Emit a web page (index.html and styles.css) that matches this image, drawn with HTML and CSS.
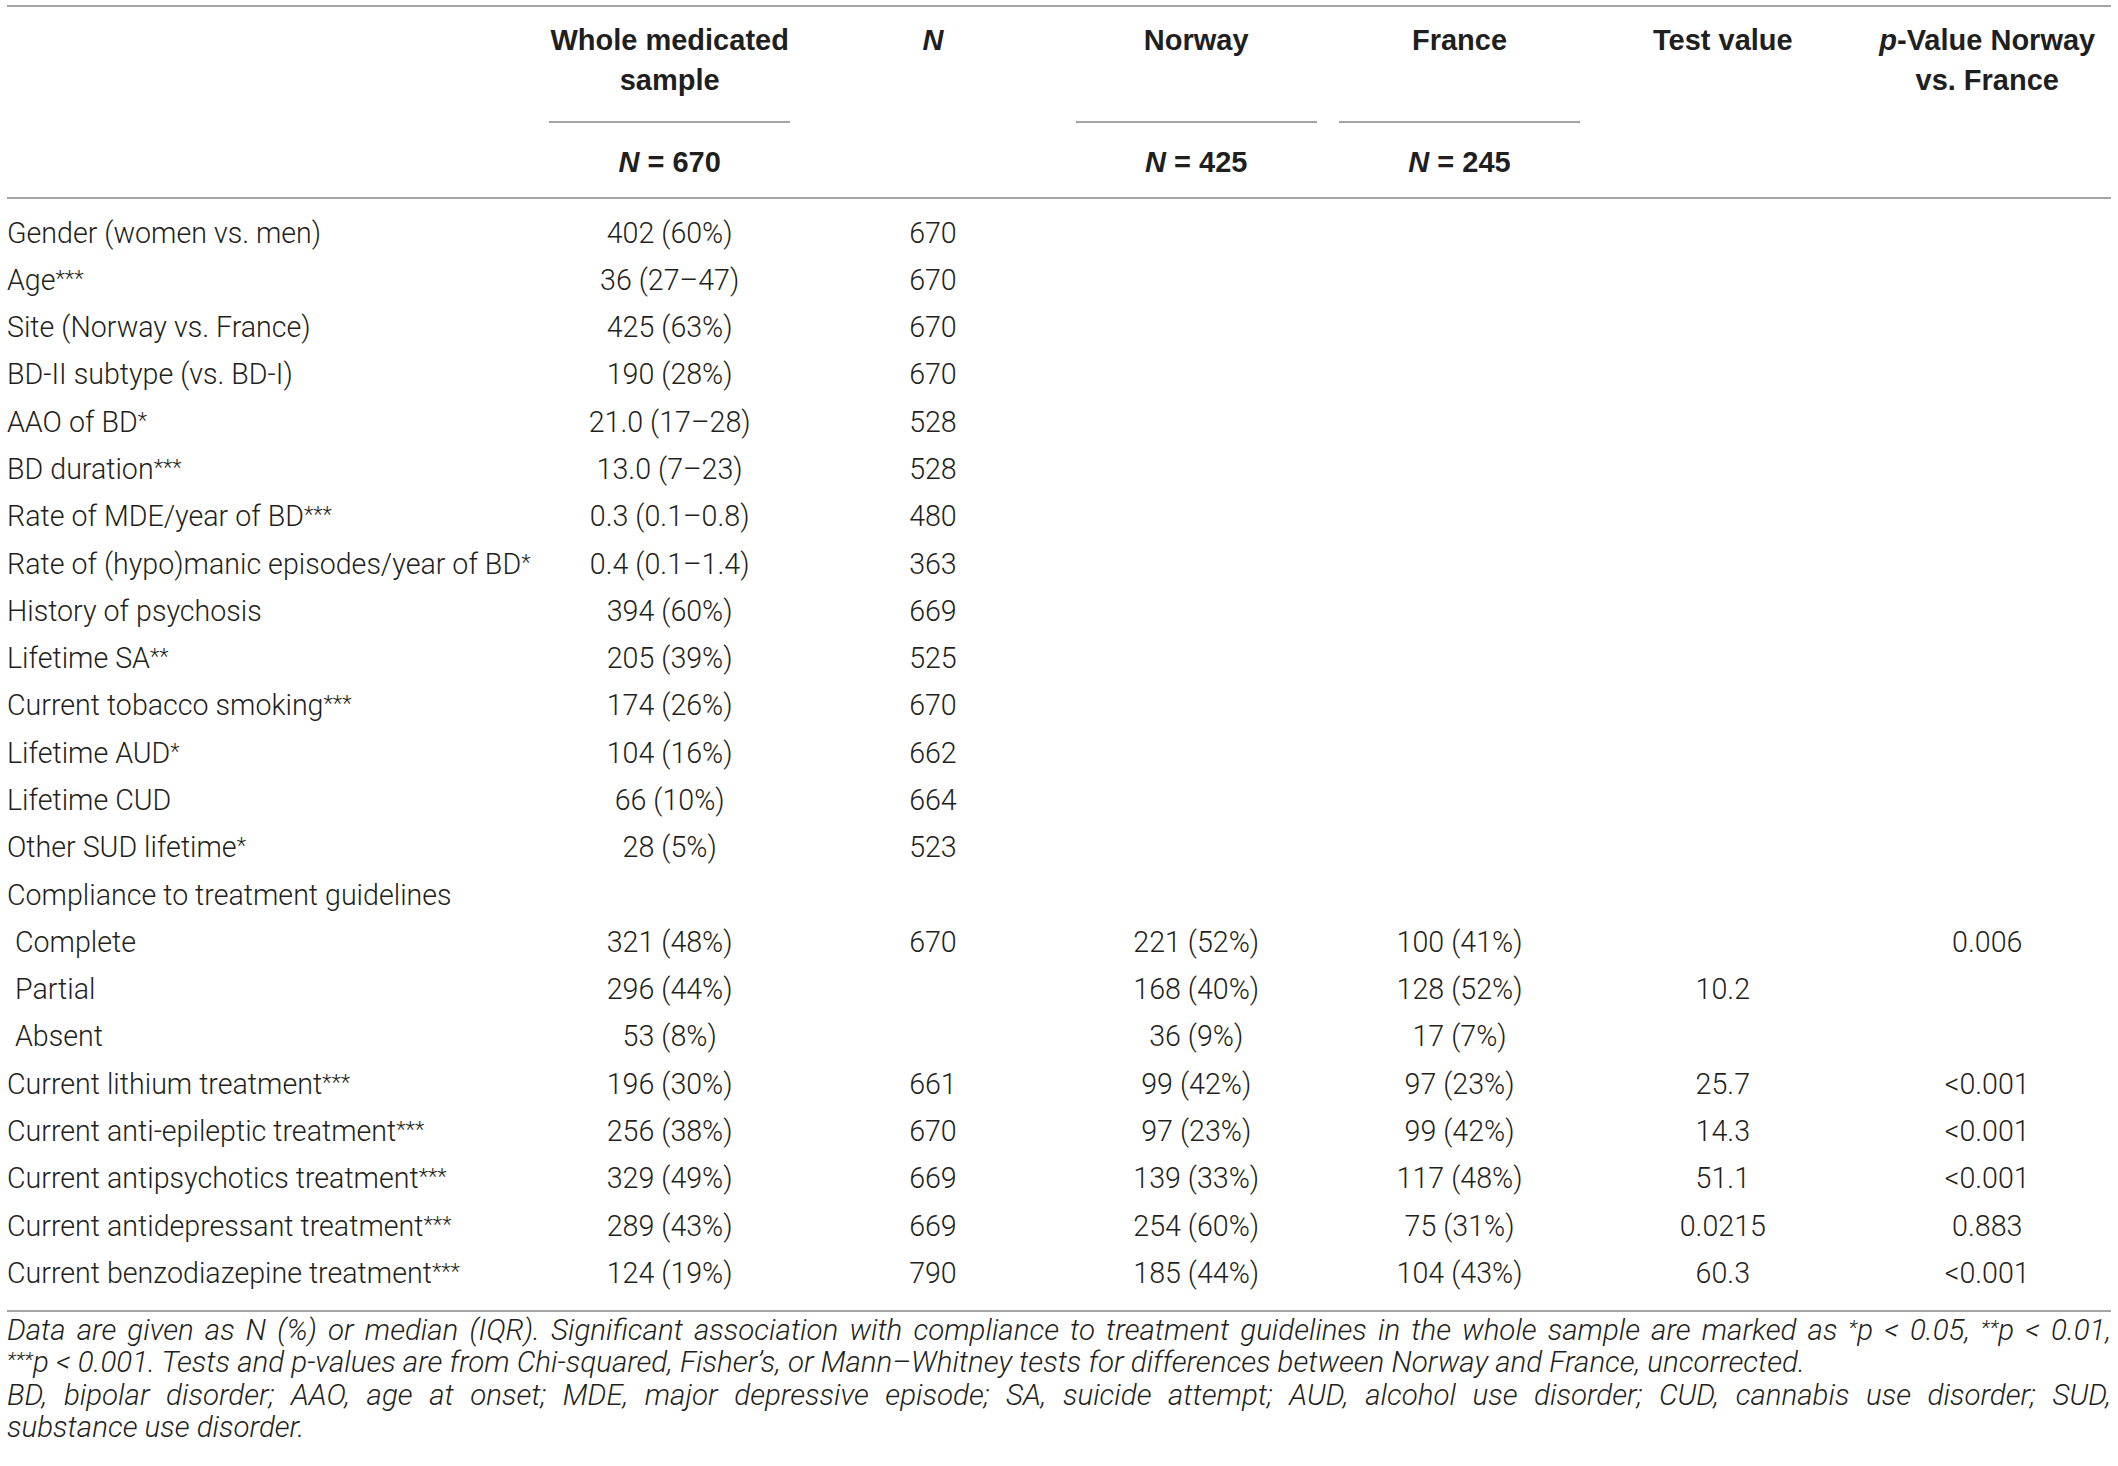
FILE: index.html
```html
<!DOCTYPE html>
<html lang="en">
<head>
  <meta charset="UTF-8">
  <meta name="viewport" content="width=device-width, initial-scale=1">
  <title>Table – Compliance to treatment guidelines</title>
  <link rel="stylesheet" href="styles.css">
</head>
<body>
  <table class="data-table">
    <colgroup>
      <col class="col-label">
      <col class="col-num">
      <col class="col-num">
      <col class="col-num">
      <col class="col-num">
      <col class="col-num">
      <col class="col-last">
    </colgroup>
    <thead>
      <tr class="head-top">
        <th></th>
        <th><div class="head-box ruled">Whole medicated<br>sample</div></th>
        <th><div class="head-box"><i>N</i></div></th>
        <th><div class="head-box ruled">Norway</div></th>
        <th><div class="head-box ruled">France</div></th>
        <th><div class="head-box">Test value</div></th>
        <th class="last"><div class="head-box"><i>p</i>-Value Norway<br>vs. France</div></th>
      </tr>
      <tr class="head-sub">
        <th></th>
        <th><i>N</i> = 670</th>
        <th></th>
        <th><i>N</i> = 425</th>
        <th><i>N</i> = 245</th>
        <th></th>
        <th class="last"></th>
      </tr>
    </thead>
    <tbody>
      <tr>
        <td>Gender (women vs. men)</td><td>402 (60%)</td><td>670</td><td></td><td></td><td></td><td class="last"></td>
      </tr>
      <tr>
        <td>Age<sup>***</sup></td><td>36 (27–47)</td><td>670</td><td></td><td></td><td></td><td class="last"></td>
      </tr>
      <tr>
        <td>Site (Norway vs. France)</td><td>425 (63%)</td><td>670</td><td></td><td></td><td></td><td class="last"></td>
      </tr>
      <tr>
        <td>BD-II subtype (vs. BD-I)</td><td>190 (28%)</td><td>670</td><td></td><td></td><td></td><td class="last"></td>
      </tr>
      <tr>
        <td>AAO of BD<sup>*</sup></td><td>21.0 (17–28)</td><td>528</td><td></td><td></td><td></td><td class="last"></td>
      </tr>
      <tr>
        <td>BD duration<sup>***</sup></td><td>13.0 (7–23)</td><td>528</td><td></td><td></td><td></td><td class="last"></td>
      </tr>
      <tr>
        <td>Rate of MDE/year of BD<sup>***</sup></td><td>0.3 (0.1–0.8)</td><td>480</td><td></td><td></td><td></td><td class="last"></td>
      </tr>
      <tr>
        <td>Rate of (hypo)manic episodes/year of BD<sup>*</sup></td><td>0.4 (0.1–1.4)</td><td>363</td><td></td><td></td><td></td><td class="last"></td>
      </tr>
      <tr>
        <td>History of psychosis</td><td>394 (60%)</td><td>669</td><td></td><td></td><td></td><td class="last"></td>
      </tr>
      <tr>
        <td>Lifetime SA<sup>**</sup></td><td>205 (39%)</td><td>525</td><td></td><td></td><td></td><td class="last"></td>
      </tr>
      <tr>
        <td>Current tobacco smoking<sup>***</sup></td><td>174 (26%)</td><td>670</td><td></td><td></td><td></td><td class="last"></td>
      </tr>
      <tr>
        <td>Lifetime AUD<sup>*</sup></td><td>104 (16%)</td><td>662</td><td></td><td></td><td></td><td class="last"></td>
      </tr>
      <tr>
        <td>Lifetime CUD</td><td>66 (10%)</td><td>664</td><td></td><td></td><td></td><td class="last"></td>
      </tr>
      <tr>
        <td>Other SUD lifetime<sup>*</sup></td><td>28 (5%)</td><td>523</td><td></td><td></td><td></td><td class="last"></td>
      </tr>
      <tr>
        <td>Compliance to treatment guidelines</td><td></td><td></td><td></td><td></td><td></td><td class="last"></td>
      </tr>
      <tr>
        <td class="sub">Complete</td><td>321 (48%)</td><td>670</td><td>221 (52%)</td><td>100 (41%)</td><td></td><td class="last">0.006</td>
      </tr>
      <tr>
        <td class="sub">Partial</td><td>296 (44%)</td><td></td><td>168 (40%)</td><td>128 (52%)</td><td>10.2</td><td class="last"></td>
      </tr>
      <tr>
        <td class="sub">Absent</td><td>53 (8%)</td><td></td><td>36 (9%)</td><td>17 (7%)</td><td></td><td class="last"></td>
      </tr>
      <tr>
        <td>Current lithium treatment<sup>***</sup></td><td>196 (30%)</td><td>661</td><td>99 (42%)</td><td>97 (23%)</td><td>25.7</td><td class="last">&lt;0.001</td>
      </tr>
      <tr>
        <td>Current anti-epileptic treatment<sup>***</sup></td><td>256 (38%)</td><td>670</td><td>97 (23%)</td><td>99 (42%)</td><td>14.3</td><td class="last">&lt;0.001</td>
      </tr>
      <tr>
        <td>Current antipsychotics treatment<sup>***</sup></td><td>329 (49%)</td><td>669</td><td>139 (33%)</td><td>117 (48%)</td><td>51.1</td><td class="last">&lt;0.001</td>
      </tr>
      <tr>
        <td>Current antidepressant treatment<sup>***</sup></td><td>289 (43%)</td><td>669</td><td>254 (60%)</td><td>75 (31%)</td><td>0.0215</td><td class="last">0.883</td>
      </tr>
      <tr>
        <td>Current benzodiazepine treatment<sup>***</sup></td><td>124 (19%)</td><td>790</td><td>185 (44%)</td><td>104 (43%)</td><td>60.3</td><td class="last">&lt;0.001</td>
      </tr>
    </tbody>
  </table>

  <div class="notes">
    <p>
      <span class="line justify">Data are given as N (%) or median (IQR). Significant association with compliance to treatment guidelines in the whole sample are marked as <sup>*</sup>p &lt; 0.05, <sup>**</sup>p &lt; 0.01,</span>
      <span class="line"><sup>***</sup>p &lt; 0.001. Tests and p-values are from Chi-squared, Fisher’s, or Mann–Whitney tests for differences between Norway and France, uncorrected.</span>
    </p>
    <p>
      <span class="line justify">BD, bipolar disorder; AAO, age at onset; MDE, major depressive episode; SA, suicide attempt; AUD, alcohol use disorder; CUD, cannabis use disorder; SUD,</span>
      <span class="line">substance use disorder.</span>
    </p>
  </div>
</body>
</html>
```

FILE: styles.css
```css
body {
  margin: 0;
  padding: 5px 7px 0;
  background: #fff;
  color: #231f20;
  font-family: Roboto, "Liberation Sans", Arial, sans-serif;
  font-weight: 300;
}

.data-table {
  width: 2104px;
  table-layout: fixed;
  border-collapse: separate;
  border-spacing: 0;
  border-top: 2px solid #a4a4a4;
  border-bottom: 2px solid #a4a4a4;
  font-size: 28px;
}

.col-label {
  width: 531px;
}

.col-num {
  width: 263.3px;
}

.col-last {
  width: 256.5px;
}

/* header */
.data-table th {
  padding: 0 11px;
  font-family: "Liberation Sans", Arial, sans-serif;
  font-size: 29px;
  font-weight: bold;
  line-height: 40px;
  text-align: center;
  vertical-align: top;
  color: #1f1f1f;
}

.data-table th.last,
.data-table td.last {
  padding-left: 13px;
  padding-right: 4px;
}

.head-top th {
  padding-top: 13px;
}

.head-box {
  height: 80px;
  padding-bottom: 21px;
}

.head-box.ruled {
  border-bottom: 2px solid #a4a4a4;
}

.head-box:not(.ruled) {
  padding-bottom: 23px;
}

.head-sub th {
  padding-top: 19px;
  padding-bottom: 15px;
  border-bottom: 2px solid #a4a4a4;
}

/* body rows */
.data-table td {
  padding: 0 11px;
  font-size: 28.6px;
  line-height: 47.28px;
  text-align: center;
  white-space: nowrap;
  color: #231f20;
}

.data-table td:first-child {
  padding-left: 0;
  text-align: left;
}

.data-table td.sub {
  padding-left: 8px;
}

.data-table tbody tr:first-child td {
  padding-top: 10.6px;
}

.data-table tbody tr:last-child td {
  padding-bottom: 13px;
}

.data-table sup {
  font-size: 22px;
  line-height: 0;
  vertical-align: 4px;
}

/* footnotes */
.notes {
  margin-top: 2px;
  font-size: 29.5px;
  font-style: italic;
  line-height: 32.3px;
  color: #231f20;
}

.notes p {
  margin: 0;
}

.notes .line {
  display: block;
}

.notes .justify {
  text-align: justify;
  text-align-last: justify;
}

.notes sup {
  font-size: 21px;
  line-height: 0;
  vertical-align: 5px;
}
```
